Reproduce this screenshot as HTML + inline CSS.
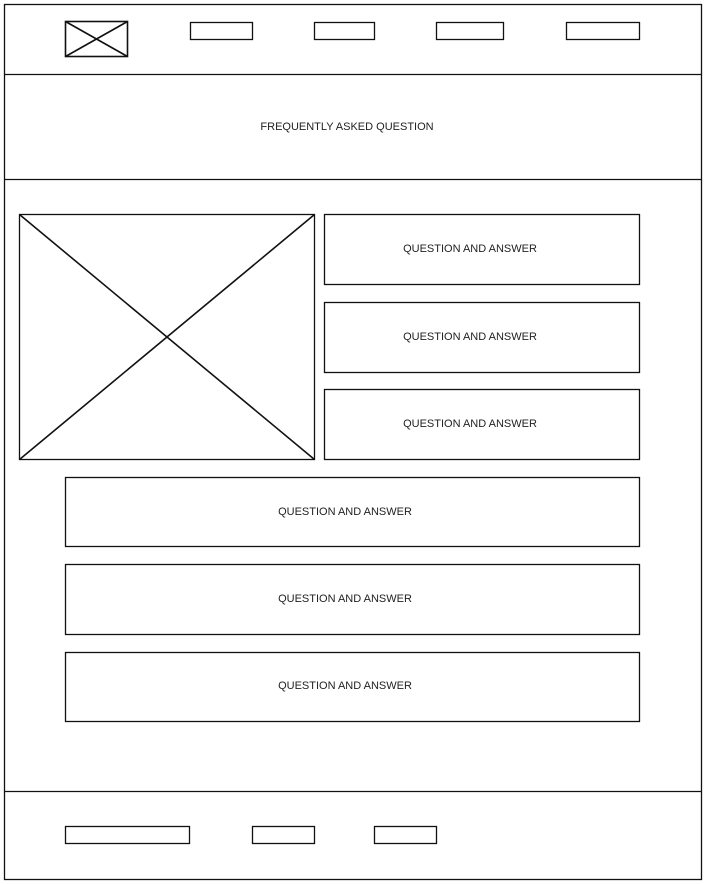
<!DOCTYPE html>
<html><head><style>
html,body{margin:0;padding:0;background:#fff;width:706px;height:884px;overflow:hidden}
svg{display:block}
text{font-family:"Liberation Sans",sans-serif;font-size:11px;fill:#222;text-anchor:middle;dominant-baseline:middle}
</style></head><body>
<svg width="706" height="884" viewBox="0 0 706 884" fill="none" stroke="#111" stroke-width="1.3">
<rect x="4.5" y="4.5" width="697" height="875"/>
<line x1="4" y1="74.5" x2="702" y2="74.5"/>
<line x1="4" y1="179.5" x2="702" y2="179.5"/>
<line x1="4" y1="791.5" x2="702" y2="791.5"/>
<rect x="65.5" y="21.5" width="62" height="35" stroke-width="1.6"/>
<line x1="65.5" y1="21.5" x2="127.5" y2="56.5" stroke-width="1.6"/>
<line x1="127.5" y1="21.5" x2="65.5" y2="56.5" stroke-width="1.6"/>
<rect x="190.5" y="22.5" width="62" height="17"/>
<rect x="314.5" y="22.5" width="60" height="17"/>
<rect x="436.5" y="22.5" width="67" height="17"/>
<rect x="566.5" y="22.5" width="73" height="17"/>
<text x="347" y="127" stroke="none">FREQUENTLY ASKED QUESTION</text>
<rect x="19.5" y="214.5" width="295" height="245"/>
<line x1="19.5" y1="214.5" x2="314.5" y2="459.5" stroke-width="1.6"/>
<line x1="314.5" y1="214.5" x2="19.5" y2="459.5" stroke-width="1.6"/>
<rect x="324.5" y="214.5" width="315" height="70"/>
<rect x="324.5" y="302.5" width="315" height="70"/>
<rect x="324.5" y="389.5" width="315" height="70"/>
<rect x="65.5" y="477.5" width="574" height="69"/>
<rect x="65.5" y="564.5" width="574" height="70"/>
<rect x="65.5" y="652.5" width="574" height="69"/>
<g stroke="none">
<text x="470" y="249">QUESTION AND ANSWER</text>
<text x="470" y="337">QUESTION AND ANSWER</text>
<text x="470" y="424">QUESTION AND ANSWER</text>
<text x="345" y="512">QUESTION AND ANSWER</text>
<text x="345" y="599">QUESTION AND ANSWER</text>
<text x="345" y="686">QUESTION AND ANSWER</text>
</g>
<rect x="65.5" y="826.5" width="124" height="17"/>
<rect x="252.5" y="826.5" width="62" height="17"/>
<rect x="374.5" y="826.5" width="62" height="17"/>
</svg>
</body></html>
